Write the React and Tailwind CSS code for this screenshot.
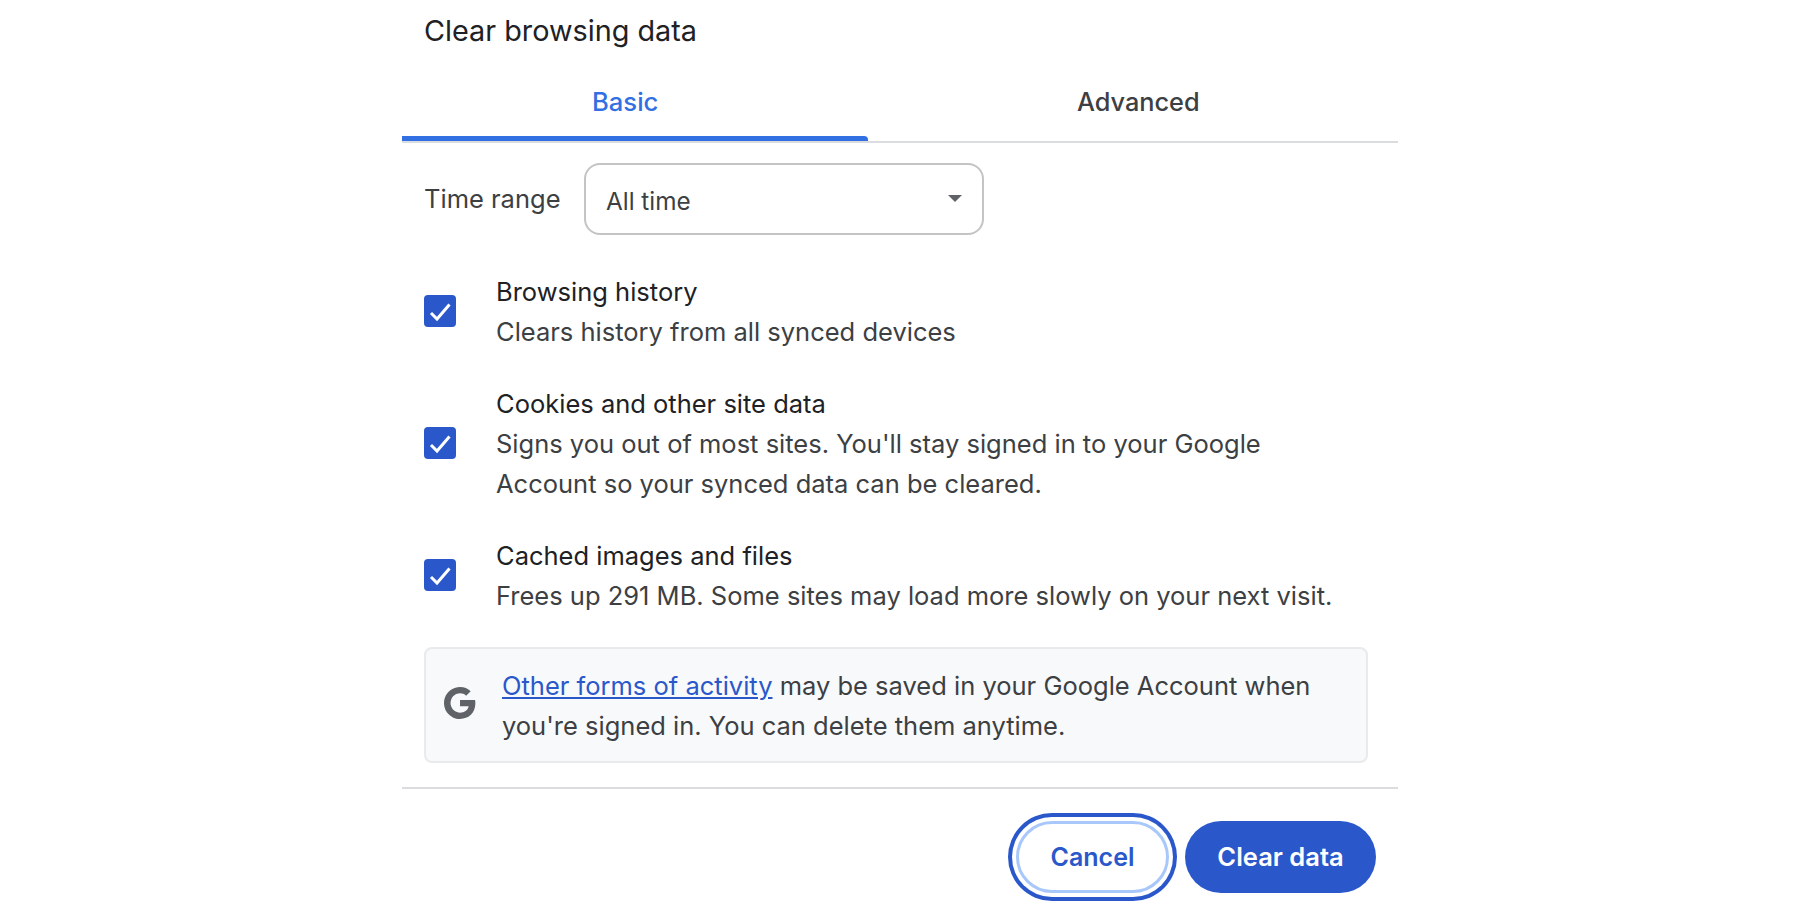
import React from 'react';

const items = [
  { title: 'Browsing history', lines: ['Clears history from all synced devices'], h: 'h-[80px]', box: 'mt-[23px]' },
  {
    title: 'Cookies and other site data',
    lines: ["Signs you out of most sites. You'll stay signed in to your Google", 'Account so your synced data can be cleared.'],
    h: 'h-[120px]',
    box: 'mt-[43px]',
  },
  { title: 'Cached images and files', lines: ['Frees up 291 MB. Some sites may load more slowly on your next visit.'], h: 'h-[80px]', box: 'mt-[23px]' },
];

const CheckBox = ({ className }) => (
  <div className={`w-8 h-8 rounded-[4px] bg-[#2a58cb] shrink-0 ${className}`}>
    <svg width="32" height="32" viewBox="0 0 32 32" fill="none">
      <path d="M7 18L13 24L25.5 9.5" stroke="white" strokeWidth="3" />
    </svg>
  </div>
);

const GoogleG = () => (
  <svg width="32" height="32" viewBox="0 0 18 18" fill="#5f6368" className="shrink-0 mb-[5px]">
    <path d="M17.64 9.2c0-.637-.057-1.251-.164-1.84H9v3.481h4.844c-.209 1.125-.843 2.078-1.796 2.717v2.258h2.908c1.702-1.567 2.684-3.874 2.684-6.615z" />
    <path d="M9 18c2.43 0 4.467-.806 5.956-2.18l-2.908-2.259c-.806.54-1.837.86-3.048.86-2.344 0-4.328-1.584-5.036-3.711H.957v2.332C2.438 15.983 5.482 18 9 18z" />
    <path d="M3.964 10.71c-.18-.54-.282-1.117-.282-1.71s.102-1.17.282-1.71V4.958H.957C.347 6.173 0 7.548 0 9s.348 2.827.957 4.042l3.007-2.332z" />
    <path d="M9 3.58c1.321 0 2.508.454 3.44 1.345l2.582-2.58C13.463.891 11.426 0 9 0 5.482 0 2.438 2.017.957 4.958L3.964 7.29C4.672 5.163 6.656 3.58 9 3.58z" />
  </svg>
);

export default function App() {
  return (
    <div className="w-[996px] h-[908px] mx-auto bg-white overflow-hidden font-['Inter',sans-serif] text-[25.5px] leading-[40px] text-[#3c4043]">
      <h1 className="pl-[22px] pt-[11px] h-[62px] text-[28.8px] leading-[40px] font-normal text-[#202124]">Clear browsing data</h1>

      {/* Tabs */}
      <div className="flex h-[81px] border-b-2 border-[#dadce0] font-medium text-[25.3px]">
        <div className="w-[466px] h-[79px] flex flex-col text-[#326fe2]">
          <span className="pl-[190px] pt-[20px] text-[25.6px]">Basic</span>
          <div className="mt-auto h-[5px] bg-[#326fe2] rounded-tr-[4px]" />
        </div>
        <div className="flex-1 pl-[209px] pt-[20px]">Advanced</div>
      </div>

      {/* Time range */}
      <div className="flex items-center pl-[22px] pt-[19px] h-[92px]">
        <span className="w-[160px] pt-[1px]">Time range</span>
        <div className="w-[400px] h-[72px] rounded-[16px] border-2 border-[#c4c4c4] flex items-center justify-between pl-[20px] pr-[20px]">
          <span className="pt-[5px] text-[24.3px]">All time</span>
          <span className="w-0 h-0 border-x-[7px] border-x-transparent border-t-[7px] border-t-[#5f6368]" />
        </div>
      </div>

      {/* Checkbox rows */}
      <div className="pt-[37px]">
        {items.map((it) => (
          <div key={it.title} className={`flex pl-[22px] mb-[32px] ${it.h}`}>
            <CheckBox className={it.box} />
            <div className="pl-[40px]">
              <div className="text-[#202124]">{it.title}</div>
              {it.lines.map((l) => (
                <div key={l}>{l}</div>
              ))}
            </div>
          </div>
        ))}
      </div>

      {/* Info box */}
      <div className="-mt-px ml-[22px] w-[944px] h-[116px] rounded-[8px] border-2 border-[#e8eaed] bg-[#f8f9fa] flex items-center pl-[18px]">
        <GoogleG />
        <p className="pl-[26px] pt-[2px]">
          <a className="text-[#2a58cb] underline">Other forms of activity</a> may be saved in your Google Account when
          <br />
          you're signed in. You can delete them anytime.
        </p>
      </div>

      {/* Footer */}
      <div className="mt-[24px] border-t-2 border-[#dadce0] flex justify-end gap-4 pr-[22px] pt-[32px]">
        <button className="w-[153px] h-[72px] rounded-full border-[3px] border-[#a8c7fa] bg-white text-[#2a58cb] font-semibold text-[25px] shadow-[0_0_0_4px_white,0_0_0_8px_#2a58cb]">Cancel</button>
        <button className="w-[191px] h-[72px] rounded-full bg-[#2a58cb] text-white font-semibold text-[25.5px]">Clear data</button>
      </div>
    </div>
  );
}
